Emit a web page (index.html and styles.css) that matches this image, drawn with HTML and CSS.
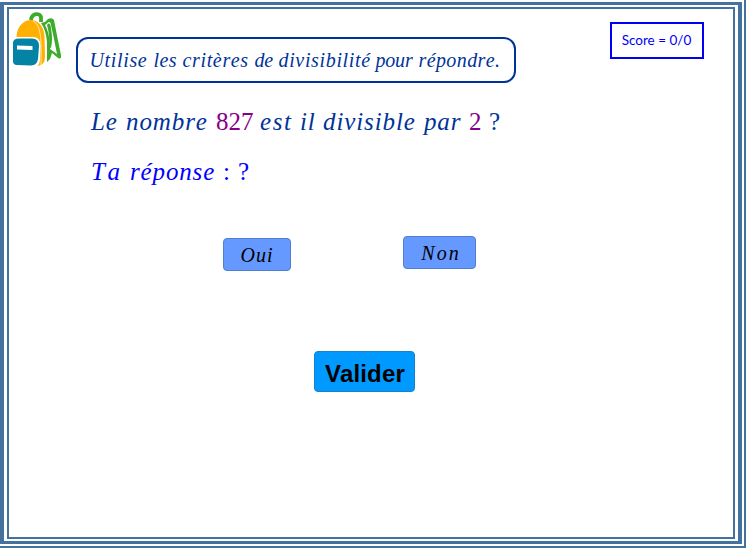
FILE: index.html
```html
<!DOCTYPE html>
<html lang="fr">
<head>
<meta charset="utf-8">
<title>Critères de divisibilité</title>
<link rel="stylesheet" href="styles.css">
</head>
<body>
<div class="page"><div class="outer"><main class="inner">
  <header class="top">
    <svg class="bag" viewBox="0 0 52 58" aria-hidden="true">
      <path d="M19 8C20 0.500 28 1 29 5v5" fill="none" stroke="#3dab2b" stroke-width="3.800"/>
      <path d="M29 11L33 10L36 7Q40 5 42 8Q45 24 49 43Q49.500 48 46 46L40 41L38 47L35 50V30Q34 18 29 11Z" fill="#3dab2b"/>
      <path d="M33 13Q37 20 38 32L38 37L45 42L41 22L38.500 11Q37 9 35 11.500Z" fill="#fff"/>
      <path d="M35 13Q38 9 39 16Q41 27 39 36L37 35Q38 23 35 13Z" fill="#3dab2b"/>
      <path d="M4.500 25C5 4 31 1 32.500 24L33 45Q33 53 26 54H12V25Z" fill="#ffb000"/>
      <path d="M21 9C29 13 29.500 26 29 53" fill="none" stroke="#fff" stroke-width=".7"/>
      <path d="M-1 30Q0 24.500 7 25H21Q28.500 25 28.500 34L28 48Q27 56 20 56L5 55Q-1 55-1 50Z" fill="#fff"/>
      <path d="M1 31Q1 26.500 7 26.500H20Q27 26.500 27 34L26 47Q25 53.500 19 53.500L5 53Q1 53 1 49Z" fill="#0583a5"/>
      <path d="M5 33.500L20.500 34V38L5 37.500Z" fill="#fff"/>
    </svg>
    <div class="instruction">
      <p class="line small l1"><span class="s06">Utilise</span><span class="s04">les</span><span class="s06">critères</span><span class="sn">de</span><span class="s06">divisibilité</span><span class="sn">pour</span><span class="s04">répondre.</span></p>
    </div>
    <div class="score">Score = 0/0</div>
  </header>
  <p class="line big l2"><span class="s10">Le</span><span class="s10">nombre</span><span class="num">827</span><span class="s17">est</span><span class="s10">il</span><span class="s10">divisible</span><span class="s08">par</span><span class="num">2</span><span class="up">?</span></p>
  <p class="line big l3"><span class="s25">Ta</span><span class="s08">réponse</span><span class="up">:</span><span class="up">?</span></p>
  <div class="choices"><button class="choice yes">Oui</button><button class="choice no">Non</button></div>
  <button class="submit">Valider</button>
</main></div></div>
</body>
</html>
```

FILE: styles.css
```css
* { box-sizing: border-box; }
body { margin: 0; background: #fff; overflow: hidden; }
p { margin: 0; }
.page { width: 746px; height: 548px; padding: 2px 2px 2px 0; border: solid #4372a1; border-width: 0 2px 2px 0; }
.outer { height: 542px; border: solid #4372a1; border-width: 3px 4px 3px 4px; padding: 2px 3px; }
.inner { height: 532px; border: 2px solid #4372a1; }
.top { display: flex; align-items: flex-start; height: 95px; padding-left: 3px; }
.bag { width: 52px; height: 58px; margin-top: 3px; flex: none; }
.instruction { width: 440px; height: 46px; margin: 28px 0 0 11.5px; padding: 9px 0 0 13px; border: 2px solid #039; border-radius: 12px; flex: none; }
.score { width: 94px; height: 37px; margin: 13px 0 0 94px; border: 2px solid #0000f5; color: #0000f5; font: 13.5px/33px Lato, sans-serif; text-align: center; white-space: nowrap; }
.line { display: grid; white-space: nowrap; font-family: "Liberation Serif", serif; font-style: italic; font-kerning: none; color: #039; }
.small { font-size: 20px; line-height: 24px; }
.big { font-size: 25px; line-height: 30px; }
.l1 { grid-template-columns: 64px 29px 72px 24px 97px 43px 84px; margin-left: -1px; }
.l2 { grid-template-columns: 35px 90px 44px 40px 23px 101px 45px 20px 20px; margin: 3px 0 0 82px; }
.l3 { grid-template-columns: 39px 93px 15px 20px; margin: 20px 0 0 82px; color: #00f; }
.num { color: #808; font-style: normal; }
.up { font-style: normal; }
.sn { letter-spacing: -.2px; }
.s04 { letter-spacing: .4px; }
.s06 { letter-spacing: .65px; }
.s08 { letter-spacing: .85px; }
.s10 { letter-spacing: .9px; }
.s17 { letter-spacing: 1.6px; }
.s25 { letter-spacing: 2.5px; }
.choices { display: flex; align-items: flex-start; height: 115px; margin: 49px 0 0 214px; }
.choice { height: 33px; padding: 0; border: 1px solid #4f80cc; border-radius: 4px; background: #69f; color: #000; font: italic 20px/31px "Liberation Serif", serif; }
.yes { width: 68px; margin-top: 2px; padding-top: 1px; letter-spacing: 1px; }
.no { width: 73px; margin-left: 112px; padding: 1px 0 0 3px; letter-spacing: 2px; }
.submit { display: block; width: 101px; height: 41px; margin-left: 305px; padding: 5px 0 0 1px; border: 1px solid #1683c8; border-radius: 4px; background: #09f; color: #000; font: bold 24px/34px "Liberation Sans", sans-serif; letter-spacing: .15px; }
```
